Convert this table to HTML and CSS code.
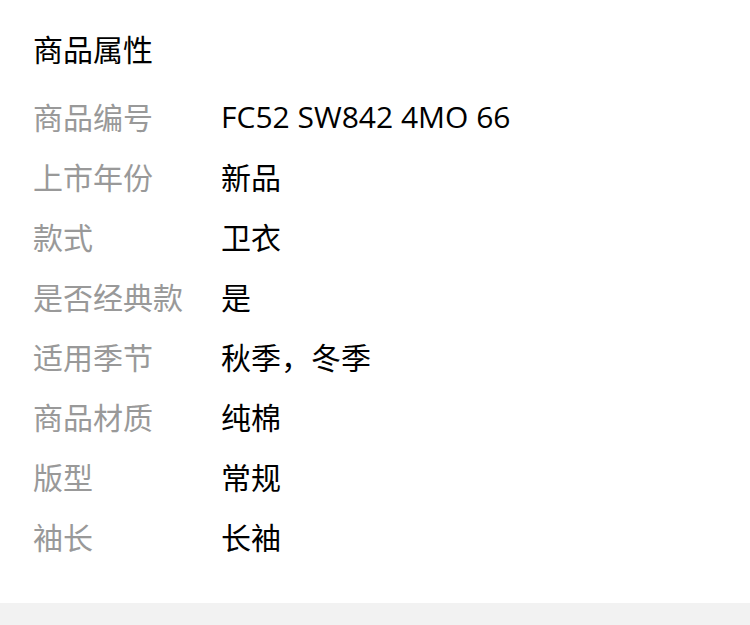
FILE: index.html
```html
<!DOCTYPE html>
<html lang="zh">

<head>
    <meta charset="UTF-8">
    <meta name="viewport" content="width=device-width, initial-scale=1.0">
    <title>商品属性</title>
    <link rel="stylesheet" href="styles.css">
</head>

<body>
    <section class="attrs">
        <h2 class="attrs_title">商品属性</h2>

        <ul class="attrs_list">
            <li class="attr"><span class="attr_name">商品编号</span><span class="attr_value">FC52 SW842 4MO 66</span></li>
            <li class="attr"><span class="attr_name">上市年份</span><span class="attr_value">新品</span></li>
            <li class="attr"><span class="attr_name">款式</span><span class="attr_value">卫衣</span></li>
            <li class="attr"><span class="attr_name">是否经典款</span><span class="attr_value">是</span></li>
            <li class="attr"><span class="attr_name">适用季节</span><span class="attr_value">秋季，冬季</span></li>
            <li class="attr"><span class="attr_name">商品材质</span><span class="attr_value">纯棉</span></li>
            <li class="attr"><span class="attr_name">版型</span><span class="attr_value">常规</span></li>
            <li class="attr"><span class="attr_name">袖长</span><span class="attr_value">长袖</span></li>
        </ul>
    </section>

    <div class="spacer"></div>
</body>

</html>
```

FILE: styles.css
```css
* {
    box-sizing: border-box;
}

body {
    margin: 0;
    background: #fff;
    font-family: "Open Sans", "Noto Sans CJK SC", sans-serif;
    font-size: 30px;
}

.attrs {
    padding: 29px 33px 37px;
}

.attrs_title {
    margin: 0 0 15px;
    font-size: 30px;
    font-weight: 400;
    line-height: 42px;
    color: #000;
}

.attrs_list {
    margin: 0;
    padding: 0;
    list-style: none;
}

.attr {
    display: flex;
    align-items: center;
    height: 60px;
}

.attr_name {
    width: 188px;
    flex-shrink: 0;
    color: #999;
}

.attr_value {
    color: #000;
}

.spacer {
    height: 40px;
    background: #f2f2f2;
}
```
